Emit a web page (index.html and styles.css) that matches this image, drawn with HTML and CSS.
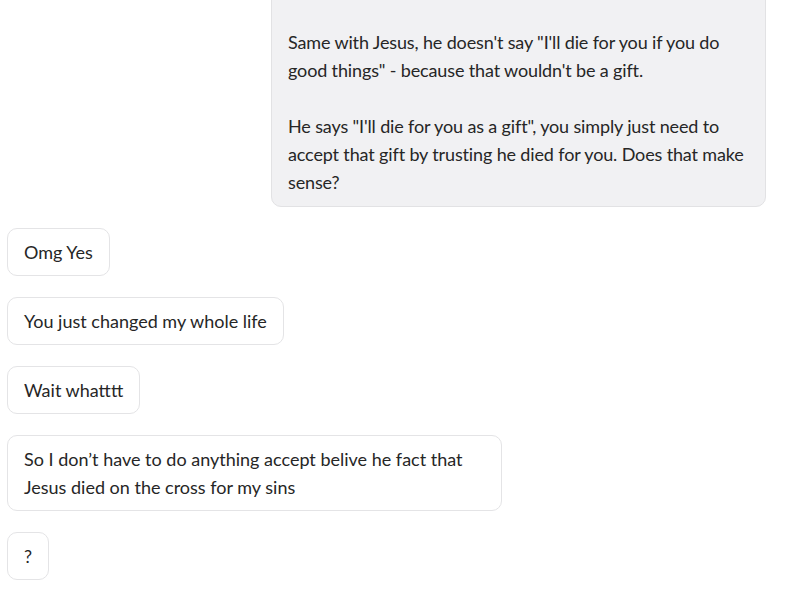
FILE: index.html
```html
<!DOCTYPE html>
<html>
<head>
<meta charset="utf-8">
<link rel="stylesheet" href="styles.css">
</head>
<body>
<div class="chat">
  <div class="row row-out">
    <div class="bubble bubble-out bubble-cut">
      <p>Same with Jesus, he doesn't say "I'll die for you if you do good things" - because that wouldn't be a gift.</p>
      <p>He says "I'll die for you as a gift", you simply just need to accept that gift by trusting he died for you. Does that make sense?</p>
    </div>
  </div>
  <div class="row"><div class="bubble">Omg Yes</div></div>
  <div class="row"><div class="bubble">You just changed my whole life</div></div>
  <div class="row"><div class="bubble">Wait whatttt</div></div>
  <div class="row"><div class="bubble">So I don’t have to do anything accept belive he fact that Jesus died on the cross for my sins</div></div>
  <div class="row"><div class="bubble">?</div></div>
</div>
</body>
</html>
```

FILE: styles.css
```css
html, body {
  margin: 0;
  padding: 0;
  background: #ffffff;
}
body {
  width: 800px;
  height: 596px;
  overflow: hidden;
  font-family: "Lato", "Liberation Sans", sans-serif;
  font-size: 18px;
  line-height: 28px;
  color: #262626;
}
.chat {
  display: flex;
  flex-direction: column;
  gap: 21px;
  padding: 0 34px 0 7px;
}
.row {
  display: flex;
  justify-content: flex-start;
}
.row-out {
  justify-content: flex-end;
}
.bubble {
  box-sizing: border-box;
  max-width: 495px;
  padding: 9px 16px;
  border: 1px solid #e4e4e6;
  border-radius: 10px;
  background: #ffffff;
}
.bubble-out {
  background: #f1f1f3;
  border-color: #e2e2e4;
  letter-spacing: -0.14px;
}
.bubble-cut {
  margin-top: -20px;
  padding-top: 47px;
  padding-bottom: 10px;
}
.bubble p {
  margin: 0 0 28px 0;
}
.bubble p:last-child {
  margin-bottom: 0;
}
```
